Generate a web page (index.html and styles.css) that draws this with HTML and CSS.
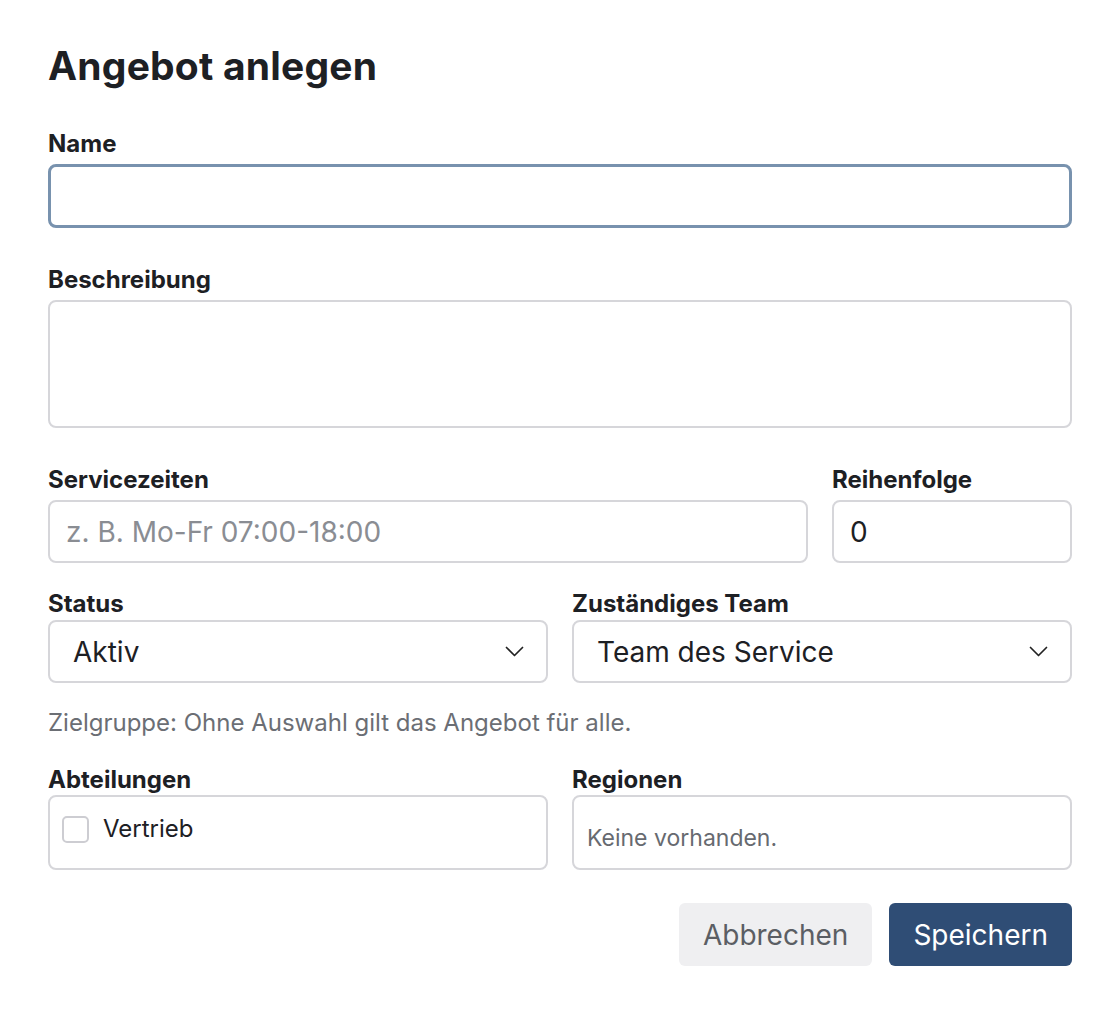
FILE: index.html
```html
<!DOCTYPE html>
<html lang="de">
<head>
  <meta charset="UTF-8">
  <meta name="viewport" content="width=device-width, initial-scale=1">
  <title>Angebot anlegen</title>
  <link rel="stylesheet" href="styles.css">
</head>
<body>
  <form class="offer-form">
    <h1>Angebot anlegen</h1>

    <div class="field">
      <label for="name">Name</label>
      <input type="text" id="name" class="input focused">
    </div>

    <div class="field">
      <label for="desc">Beschreibung</label>
      <textarea id="desc" class="input textarea"></textarea>
    </div>

    <div class="row row-times">
      <div class="field">
        <label for="hours">Servicezeiten</label>
        <input type="text" id="hours" class="input" placeholder="z. B. Mo-Fr 07:00-18:00">
      </div>
      <div class="field">
        <label for="order">Reihenfolge</label>
        <input type="text" id="order" class="input" value="0">
      </div>
    </div>

    <div class="row row-half tight">
      <div class="field">
        <label for="status">Status</label>
        <div class="select">
          <span>Aktiv</span>
          <svg width="19" height="11" viewBox="0 0 19 11"><path d="M1.5 1.5l8 8 8-8" fill="none" stroke="#222" stroke-width="1.7" stroke-linecap="round" stroke-linejoin="round"/></svg>
        </div>
      </div>
      <div class="field">
        <label for="team">Zuständiges Team</label>
        <div class="select">
          <span>Team des Service</span>
          <svg width="19" height="11" viewBox="0 0 19 11"><path d="M1.5 1.5l8 8 8-8" fill="none" stroke="#222" stroke-width="1.7" stroke-linecap="round" stroke-linejoin="round"/></svg>
        </div>
      </div>
    </div>

    <p class="hint">Zielgruppe: Ohne Auswahl gilt das Angebot für alle.</p>

    <div class="row row-half tight boxes">
      <div class="field">
        <label>Abteilungen</label>
        <div class="box">
          <div class="check"><span class="checkbox"></span>Vertrieb</div>
        </div>
      </div>
      <div class="field">
        <label>Regionen</label>
        <div class="box empty">Keine vorhanden.</div>
      </div>
    </div>

    <div class="actions">
      <button type="button" class="btn btn-cancel">Abbrechen</button>
      <button type="button" class="btn btn-save">Speichern</button>
    </div>
  </form>
</body>
</html>
```

FILE: styles.css
```css
body {
  margin: 0;
  background: #fff;
  color: #1d2024;
  font-family: Inter, "Noto Sans", sans-serif;
}

.offer-form {
  padding: 40px 48px;
}

h1 {
  margin: 0 0 38px;
  font-size: 39px;
  line-height: 52px;
  font-weight: 700;
  letter-spacing: 0.2px;
}

.field {
  display: flex;
  flex-direction: column;
  margin-bottom: 38px;
}

label {
  font-size: 24px;
  line-height: 28px;
  font-weight: 700;
  margin-bottom: 6px;
}

.input {
  box-sizing: border-box;
  width: 100%;
  height: 63px;
  padding: 0 16px;
  border: 2px solid #d6d6da;
  border-radius: 8px;
  font-family: inherit;
  font-size: 28px;
  color: #1d2024;
  background: #fff;
}

.input::placeholder {
  color: #8a8d93;
}

.focused {
  height: 64px;
  border: 3px solid #7892ae;
}

.textarea {
  height: 128px;
  resize: none;
}

.row {
  display: grid;
  gap: 24px;
}

.row-times {
  grid-template-columns: 1fr 240px;
}

.row-times .field {
  margin-bottom: 27px;
}

.row-half {
  grid-template-columns: 1fr 1fr;
}

.tight .field {
  margin-bottom: 0;
}

.tight label {
  margin-bottom: 2px;
}

.boxes label {
  margin-bottom: 1px;
}

.select {
  box-sizing: border-box;
  height: 63px;
  padding: 0 22px 0 23px;
  border: 2px solid #d6d6da;
  border-radius: 8px;
  display: flex;
  align-items: center;
  justify-content: space-between;
  font-size: 28px;
}

.hint {
  margin: 26px 0 29px;
  font-size: 24px;
  line-height: 28px;
  color: #6b6e74;
}

.box {
  box-sizing: border-box;
  height: 75px;
  padding: 18px 12px 0;
  border: 2px solid #d6d6da;
  border-radius: 8px;
}

.check {
  display: flex;
  align-items: center;
  gap: 14px;
  font-size: 24px;
  line-height: 28px;
}

.checkbox {
  box-sizing: border-box;
  width: 27px;
  height: 27px;
  border: 2px solid #cdcdd2;
  border-radius: 5px;
}

.empty {
  display: flex;
  align-items: center;
  padding: 10px 13px 0;
  font-size: 23px;
  color: #676a70;
}

.actions {
  display: flex;
  justify-content: flex-end;
  gap: 17px;
  margin-top: 33px;
}

.btn {
  height: 63px;
  padding: 0 24px;
  border: none;
  border-radius: 6px;
  font-family: inherit;
  font-size: 28px;
  cursor: pointer;
}

.btn-cancel {
  background: #efeff1;
  color: #5b5e64;
}

.btn-save {
  background: #2f4d75;
  color: #fff;
}
```
